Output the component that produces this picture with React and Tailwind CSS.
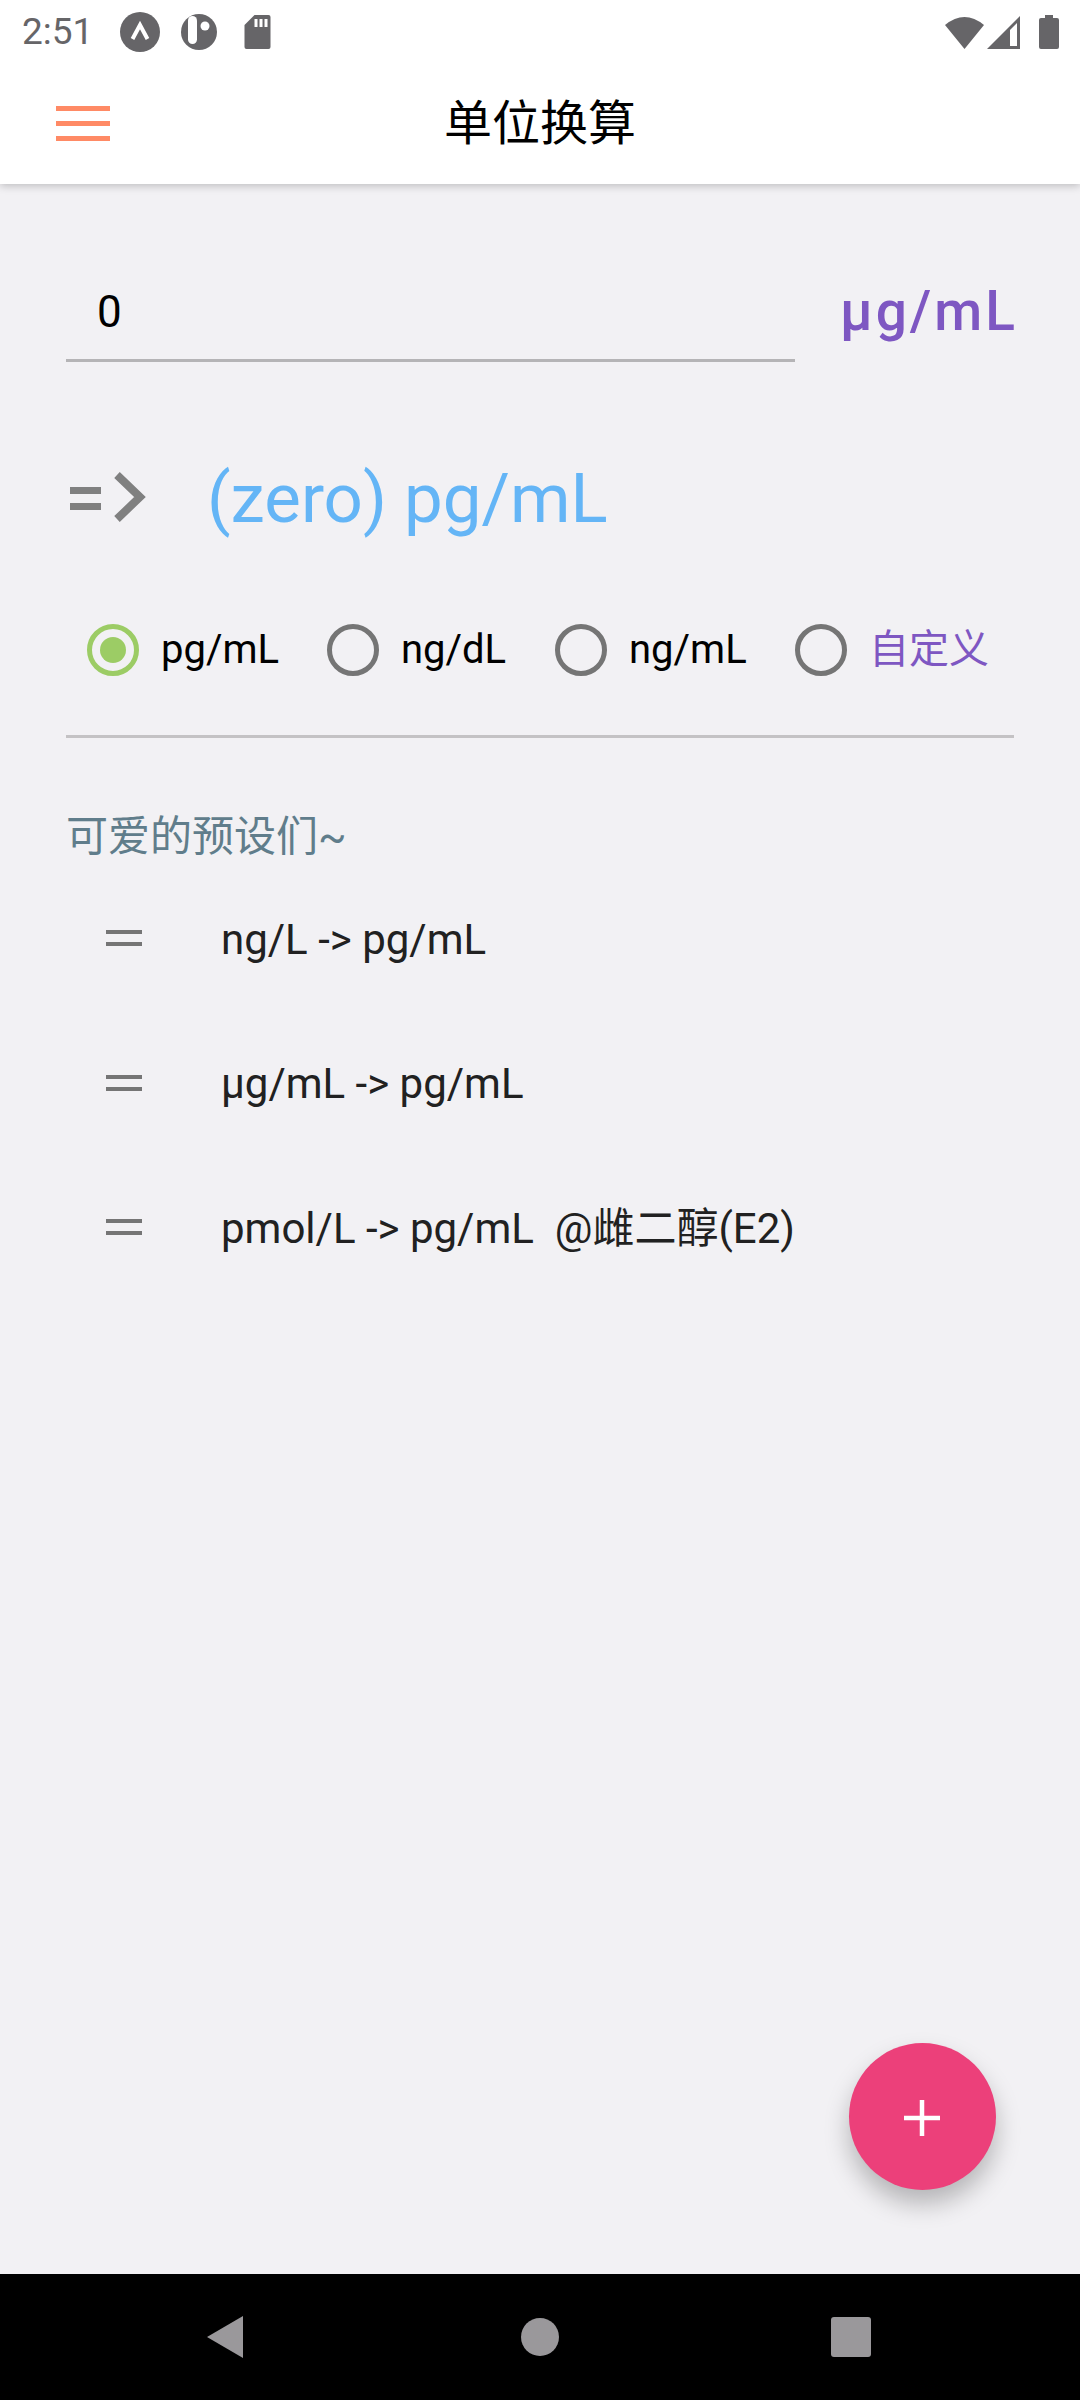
import React from 'react';

const roboto = 'font-[Roboto,sans-serif]';
const cjk = "font-['Roboto','Noto_Sans_CJK_SC',sans-serif]";

const Radio = ({ label, checked, purple, className }) => (
  <div className={`flex items-center ${className}`}>
    {checked ? (
      <div className="w-[52px] h-[52px] rounded-full border-[5px] border-[#9ccc65] flex items-center justify-center">
        <div className="w-[26px] h-[26px] rounded-full bg-[#9ccc65]"></div>
      </div>
    ) : (
      <div className="w-[52px] h-[52px] rounded-full border-[5px] border-[#757575]"></div>
    )}
    <span className={`ml-[22px] text-[40px] leading-[52px] ${cjk} ${purple ? 'text-[#7e57c2]' : 'text-black'}`}>{label}</span>
  </div>
);

const Preset = ({ text }) => (
  <div className="h-[144.5px] flex items-center pl-[40px]">
    <svg width="36" height="16" viewBox="0 0 36 16" className="shrink-0 mb-[8px]">
      <rect x="0" y="0" width="36" height="4" fill="#757575" />
      <rect x="0" y="12" width="36" height="4" fill="#757575" />
    </svg>
    <span className={`ml-[79px] mb-[6px] text-[42px] text-[#212121] whitespace-pre ${cjk}`}>{text}</span>
  </div>
);

export default function App() {
  return (
    <div className="relative w-[1080px] h-[2400px] flex flex-col bg-[#f2f1f4] overflow-hidden">
      <header className="h-[184px] bg-white shadow-[0_2px_8px_rgba(0,0,0,0.22)] z-10 flex flex-col">
        {/* status bar */}
        <div className="h-[64px] flex items-center pl-[22px] pr-[21px] text-[#666568]">
          <span className={`w-[68px] text-[37px] ${roboto}`}>2:51</span>
          <svg width="40" height="40" viewBox="0 0 40 40" className="ml-[30px]">
            <circle cx="20" cy="20" r="20" fill="#666568" />
            <path d="M12.5 27 L20 13 L27.5 27" fill="none" stroke="#fff" strokeWidth="4" />
          </svg>
          <svg width="36" height="36" viewBox="0 0 36 36" className="ml-[21px]">
            <circle cx="18" cy="18" r="18" fill="#666568" />
            <rect x="7" y="2" width="9" height="28" rx="4.5" fill="#fff" />
            <circle cx="24" cy="12" r="4.5" fill="#fff" />
          </svg>
          <svg width="27" height="34" viewBox="0 0 26 34" className="ml-[27px]">
            <path d="M10 0 H24 a2 2 0 0 1 2 2 V32 a2 2 0 0 1 -2 2 H2 a2 2 0 0 1 -2 -2 V10 Z" fill="#666568" />
            <rect x="10" y="4" width="3" height="8" fill="#fff" />
            <rect x="15" y="4" width="3" height="8" fill="#fff" />
            <rect x="20" y="4" width="3" height="8" fill="#fff" />
          </svg>
          <div className="flex-1"></div>
          <svg width="39" height="33" viewBox="0 0 39 33">
            <path d="M0 9 Q19.5 -7 39 9 L19.5 33 Z" fill="#666568" />
          </svg>
          <svg width="33" height="33" viewBox="0 0 33 33" className="ml-[3px]">
            <path d="M33 0 V33 H0 Z" fill="#666568" />
            <path d="M30 7 V30 H23 V14 Z" fill="#fff" />
          </svg>
          <svg width="20" height="34" viewBox="0 0 20 34" className="ml-[19px]">
            <path d="M6 0 H14 V3 H18 a2 2 0 0 1 2 2 V32 a2 2 0 0 1 -2 2 H2 a2 2 0 0 1 -2 -2 V5 a2 2 0 0 1 2 -2 H6 Z" fill="#666568" />
          </svg>
        </div>
        {/* app bar */}
        <div className="relative flex-1 flex items-center justify-center">
          <div className="absolute left-[56px] top-[42px] w-[54px] flex flex-col gap-[10px]">
            <div className="h-[5px] bg-[#ff8a65]"></div>
            <div className="h-[5px] bg-[#ff8a65]"></div>
            <div className="h-[5px] bg-[#ff8a65]"></div>
          </div>
          <h1 className={`text-[48px] font-normal text-black ${cjk}`}>单位换算</h1>
        </div>
      </header>

      <main className="relative flex-1 px-[66px]">
        <div className="flex items-center mt-[76px]">
          <div className="w-[729px] shrink-0 h-[102px] border-b-[3px] border-[#b5b4b6] pl-[31px] pt-[4px] flex items-center">
            <span className={`text-[44px] text-black ${roboto}`}>0</span>
          </div>
          <span className={`ml-[45px] text-[55px] tracking-[3px] whitespace-nowrap font-medium text-[#7e57c2] ${roboto}`}>µg/mL</span>
        </div>

        <div className="flex items-center mt-[90px] h-[90px]">
          <svg width="80" height="50" viewBox="0 0 80 50" className="ml-[4px] shrink-0">
            <rect x="0" y="15" width="31" height="7" fill="#808080" />
            <rect x="0" y="31" width="31" height="7" fill="#808080" />
            <path d="M47 3 L70 25 L47 47" fill="none" stroke="#808080" strokeWidth="8" />
          </svg>
          <span className={`ml-[57px] mt-[4px] text-[69px] text-[#64b5f6] ${roboto}`}>(zero) pg/mL</span>
        </div>

        <div className="flex items-center mt-[82px] pl-[21px] h-[52px]">
          <Radio label="pg/mL" checked className="w-[240px]" />
          <Radio label="ng/dL" className="w-[228px]" />
          <Radio label="ng/mL" className="w-[240px]" />
          <Radio label="自定义" purple />
        </div>

        <div className="h-[3px] bg-[#c4c2c4] mt-[59px] w-[948px]"></div>

        <p className={`mt-[75px] text-[42px] leading-[48px] text-[#607d8b] ${cjk}`}>可爱的预设们~</p>

        <div className="mt-[9px]">
          <Preset text="ng/L -> pg/mL" />
          <Preset text="µg/mL -> pg/mL" />
          <Preset text="pmol/L -> pg/mL  @雌二醇(E2)" />
        </div>

        <button className="absolute left-[849px] bottom-[84px] w-[147px] h-[147px] rounded-full bg-[#ec407a] shadow-[0_14px_24px_rgba(0,0,0,0.25)] flex items-center justify-center">
          <svg width="36" height="36" viewBox="0 0 36 36" className="mr-[2px] mt-[3px]">
            <path d="M18 0 V36 M0 18 H36" stroke="#fff" strokeWidth="4.5" />
          </svg>
        </button>
      </main>

      <nav className="h-[126px] bg-black flex items-center pl-[207px]">
        <svg width="36" height="42" viewBox="0 0 36 42">
          <path d="M36 0 V42 L0 21 Z" fill="#9a989b" />
        </svg>
        <div className="ml-[278px] w-[38px] h-[38px] rounded-full bg-[#9a989b]"></div>
        <div className="ml-[272px] w-[40px] h-[40px] rounded-[3px] bg-[#9a989b]"></div>
      </nav>
    </div>
  );
}
